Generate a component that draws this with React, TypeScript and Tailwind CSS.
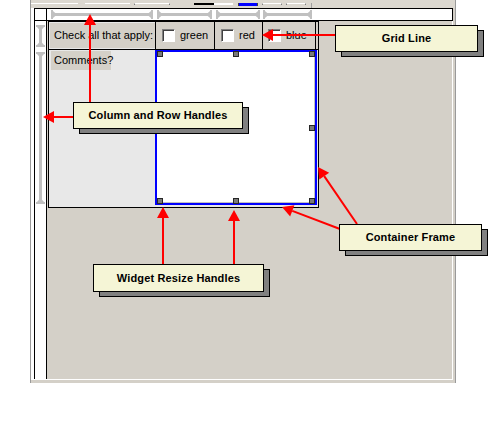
import React from 'react';

// --- pijl met rode punt ---
type ArrowProps = { x1: number; y1: number; x2: number; y2: number };

const Arrow: React.FC<ArrowProps> = ({ x1, y1, x2, y2 }) => {
    const dx = x2 - x1;
    const dy = y2 - y1;
    const len = Math.hypot(dx, dy);
    const ux = dx / len;
    const uy = dy / len;
    const bx = x2 - ux * 11;
    const by = y2 - uy * 11;
    const px = -uy * 6;
    const py = ux * 6;
    return (
        <g>
            <line x1={x1} y1={y1} x2={bx} y2={by} stroke="#ff0000" strokeWidth={2} />
            <polygon points={`${x2},${y2} ${bx + px},${by + py} ${bx - px},${by - py}`} fill="#ff0000" />
        </g>
    );
};

// --- gele uitleg labels ---
const Callout: React.FC<{ label: string; pos: string }> = ({ label, pos }) => (
    <div className={`absolute ${pos}`}>
        <div className="absolute left-[6px] top-[5px] w-full h-full bg-[#808080] border border-black" />
        <div className="relative w-full h-full bg-[#f5f5d6] border border-black flex items-center justify-center text-[11px] font-bold tracking-[0.15px] text-black">
            {label}
        </div>
    </div>
);

const CheckCell: React.FC<{ label: string; cls: string }> = ({ label, cls }) => (
    <div className={`flex items-center border-r border-black ${cls}`}>
        <span className="w-[13px] h-[13px] bg-white border border-t-[#808080] border-l-[#808080] border-b-white border-r-white shadow-[inset_1px_1px_0_#404040]" />
        <span className="ml-[5px] text-[11px] text-black">{label}</span>
    </div>
);

// ruler handle, horizontaal
const HSeg: React.FC<{ a: number; b: number }> = ({ a, b }) => (
    <g fill="#c0c0c0">
        <rect x={a + 2} y={4} width={b - a - 4} height={3} />
        <rect x={a} y={1} width={2} height={9} />
        <rect x={b - 2} y={1} width={2} height={9} />
        <polygon points={`${a + 2},2 ${a + 6},5.5 ${a + 2},9`} />
        <polygon points={`${b - 2},2 ${b - 6},5.5 ${b - 2},9`} />
    </g>
);

// ruler handle, verticaal
const VSeg: React.FC<{ a: number; b: number }> = ({ a, b }) => (
    <g fill="#c0c0c0">
        <rect x={3} y={a + 2} width={3} height={b - a - 4} />
        <rect x={0} y={a} width={9} height={2} />
        <rect x={0} y={b - 2} width={9} height={2} />
        <polygon points={`1,${a + 2} 4.5,${a + 6} 8,${a + 2}`} />
        <polygon points={`1,${b - 2} 4.5,${b - 6} 8,${b - 2}`} />
    </g>
);

const Handle: React.FC<{ pos: string }> = ({ pos }) => (
    <div className={`absolute w-[6px] h-[6px] bg-[#7a7a7a] border border-[#262626] ${pos}`} />
);

const App: React.FC = () => {
    return (
        <div className="relative w-[500px] h-[425px] bg-white overflow-hidden font-['Liberation_Sans',Arial,sans-serif]">
            {/* frame van de designer */}
            <div className="ml-[30px] w-[426px] h-[383px] bg-[#d4d0c8] border-l border-r border-[#9a9a9a] flex flex-col">
                {/* resten van de toolbar */}
                <div className="h-[8px] flex items-start pt-[3px] bg-[#dcd8d0]">
                    <div className="w-[47px] h-[2px] border-t border-white" />
                    <div className="ml-[7px] w-[45px] h-[2px] border-t border-white" />
                    <div className="ml-[4px] w-[36px] h-[2px] border-t border-l border-r border-t-white border-x-[#808080]" />
                    <div className="ml-[24px] w-[20px] h-[2px] bg-black" />
                    <div className="w-[19px] h-[2px] bg-white" />
                    <div className="ml-[5px] w-[20px] h-[3px] bg-[#0000ff] border-x border-[#404040]" />
                    <div className="ml-[4px] w-[20px] h-[2px] border-t border-x border-t-white border-x-[#808080]" />
                    <div className="ml-[4px] w-[20px] h-[2px] border-t border-x border-t-white border-x-[#808080]" />
                    <div className="ml-[5px] w-px h-[5px] bg-[#a0a0a0]" />
                </div>

                <div className="h-[372px] mr-[2px] bg-white pl-[3px] pb-px flex flex-col">
                    {/* bovenste ruler */}
                    <div className="flex h-[13px]">
                        <div className="w-[12px] border-l border-t border-b border-black bg-white" />
                        <div className="flex-1 border border-black bg-white">
                            <svg width="405" height="11" className="block">
                                <HSeg a={4} b={106} />
                                <HSeg a={110} b={165} />
                                <HSeg a={169} b={213} />
                                <HSeg a={216} b={265} />
                            </svg>
                        </div>
                    </div>

                    <div className="flex flex-1">
                        {/* linker ruler */}
                        <div className="w-[12px] border-l border-black bg-white">
                            <svg width="11" height="200" className="block ml-px">
                                <VSeg a={4} b={26} />
                                <VSeg a={31} b={183} />
                            </svg>
                        </div>

                        {/* canvas */}
                        <div className="flex-1 border-l border-r border-l-black border-r-white bg-[#d4d0c8]">
                            <div className="ml-px w-[271px] border border-black bg-[#e8e8e8] flex flex-col">
                                {/* header rij */}
                                <div className="flex h-[28px] border-b border-black bg-[#d4d0c8] text-black">
                                    <div className="w-[107px] border-r border-black pl-px pt-px pb-px bg-[#e8e8e8]">
                                        <div className="h-full bg-[#d4d0c8] flex items-center pl-[4px] text-[11px]">
                                            Check all that apply:
                                        </div>
                                    </div>
                                    <CheckCell label="green" cls="w-[59px] pl-[6px]" />
                                    <CheckCell label="red" cls="w-[48px] pl-[6px]" />
                                    <CheckCell label="blue" cls="w-[53px] pl-[5px]" />
                                </div>

                                {/* comments rij */}
                                <div className="flex h-[157px]">
                                    <div className="w-[106px] pl-[2px] pt-px">
                                        <span className="block w-[60px] h-[19px] leading-[19px] pl-[3px] bg-[#d4d0c8] text-[11px] text-black">
                                            Comments?
                                        </span>
                                    </div>
                                    <div className="relative w-[162px] h-[155px] border-2 border-[#0000ff] bg-white shadow-[inset_-1px_-1px_0_#c0c0c0]">
                                        <Handle pos="left-0 -top-px" />
                                        <Handle pos="left-[76px] -top-px" />
                                        <Handle pos="right-0 -top-px" />
                                        <Handle pos="right-0 top-[73px]" />
                                        <Handle pos="left-0 -bottom-px" />
                                        <Handle pos="left-[76px] -bottom-px" />
                                        <Handle pos="right-0 -bottom-px" />
                                    </div>
                                </div>
                            </div>
                        </div>
                    </div>
                </div>
            </div>

            {/* pijlen */}
            <svg className="absolute inset-0 pointer-events-none" width="500" height="425">
                <Arrow x1={90} y1={102} x2={90} y2={14} />
                <Arrow x1={73} y1={117} x2={43} y2={117} />
                <Arrow x1={335} y1={35} x2={262} y2={35} />
                <Arrow x1={357} y1={224} x2={318} y2={167} />
                <Arrow x1={340} y1={229} x2={282} y2={207} />
                <Arrow x1={163} y1={264} x2={163} y2={207} />
                <Arrow x1={234} y1={264} x2={234} y2={210} />
            </svg>

            <Callout label="Grid Line" pos="left-[335px] top-[25px] w-[143px] h-[27px]" />
            <Callout label="Column and Row Handles" pos="left-[73px] top-[102px] w-[170px] h-[27px]" />
            <Callout label="Container Frame" pos="left-[339px] top-[224px] w-[143px] h-[27px]" />
            <Callout label="Widget Resize Handles" pos="left-[93px] top-[264px] w-[171px] h-[28px]" />
        </div>
    );
};

export default App;
